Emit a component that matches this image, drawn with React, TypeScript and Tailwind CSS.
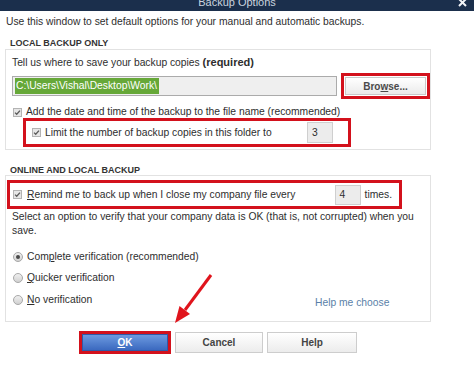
import React from "react";

function Check() {
  return (
    <svg width="9" height="9" viewBox="0 0 9 9" className="shrink-0">
      <rect x="0.5" y="0.5" width="8" height="8" fill="#e6e6e6" stroke="#b3b3b3" />
      <path d="M2 4.6 L3.7 6.3 L7 2.6" fill="none" stroke="#5a5a5a" strokeWidth="1.3" />
    </svg>
  );
}

function Radio({ on }: { on?: boolean }) {
  return (
    <svg width="10" height="10" viewBox="0 0 10 10" className="shrink-0">
      <defs>
        <linearGradient id="rg" x1="0" y1="0" x2="0" y2="1">
          <stop offset="0" stopColor="#f2f2f2" />
          <stop offset="1" stopColor="#cfcfcf" />
        </linearGradient>
      </defs>
      <circle cx="5" cy="5" r="4.5" fill="url(#rg)" stroke="#a8a8a8" />
      {on && <circle cx="5" cy="5" r="2" fill="#4a4a4a" />}
    </svg>
  );
}

export default function App() {
  return (
    <div className="w-[474px] h-[368px] bg-white relative overflow-hidden text-[#2e2e2e] font-['Liberation_Sans',Arial,sans-serif] text-[10.3px]">
      {/* title bar */}
      <div className="h-[11px] bg-[#1b2f4c] relative overflow-hidden">
        <div className="absolute left-0 right-0 top-[-4px] text-center text-[11px] leading-[12px] text-[#c9d3df]">
          Backup Options
        </div>
        <svg className="absolute left-[458px] top-[-2px]" width="9" height="9" viewBox="0 0 9 9">
          <path d="M1 1 L8 8 M8 1 L1 8" stroke="#f2f4f7" strokeWidth="2" />
        </svg>
      </div>

      <div className="pl-[6px] pt-[5px] h-[17px] leading-[12px] whitespace-nowrap">
        Use this window to set default options for your manual and automatic backups.
      </div>

      <div className="mt-[10px] h-[11px] leading-[11px] pl-[10px] text-[9px] font-bold text-[#333]">
        LOCAL BACKUP ONLY
      </div>

      {/* panel 1 */}
      <div className="ml-[5px] w-[426px] h-[101px] border border-[#e2e2e2] pl-[6px] flex flex-col">
        <div className="mt-[6px] h-[12px] leading-[12px] whitespace-nowrap">
          Tell us where to save your backup copies <span className="font-bold text-[11px]">(required)</span>
        </div>
        <div className="mt-[5px] h-[26px] flex items-center">
          <div className="w-[325px] h-[20px] border border-[#ababab] bg-[#efefef] pl-[2px] flex items-center">
            <span className="bg-[#66a838] text-white h-[16px] leading-[16px] pl-[1px] pr-[2px] whitespace-nowrap">
              C:\Users\Vishal\Desktop\Work\
            </span>
          </div>
          <div className="ml-[4px] w-[89px] h-[26px] border-[3px] border-[#d3111c] p-[1px] flex">
            <div className="flex-1 bg-gradient-to-b from-white to-[#ebebeb] border border-[#c9c9c9] flex items-center justify-center font-bold text-[10px] text-[#4a4a4a]">
              <span>
                Bro<span className="underline">w</span>se...
              </span>
            </div>
          </div>
        </div>
        <div className="mt-[7px] h-[12px] flex items-center pl-[1px] gap-[4px] whitespace-nowrap">
          <Check />
          <span className="leading-[12px]">Add the date and time of the backup to the file name (recommended)</span>
        </div>
        <div className="ml-[11px] w-[328px] h-[29px] border-[3px] border-[#d3111c] flex items-center pl-[6px] pr-[15px]">
          <Check />
          <span className="ml-[4px] leading-[12px] whitespace-nowrap">
            Limit the number of backup copies in this folder to
          </span>
          <div className="ml-auto w-[26px] h-[21px] bg-[#ececec] border border-[#cfcfcf] pl-[4px] flex items-center">
            3
          </div>
        </div>
      </div>

      <div className="mt-[15px] h-[10px] leading-[10px] pl-[10px] text-[9px] font-bold text-[#333]">
        ONLINE AND LOCAL BACKUP
      </div>

      {/* panel 2 */}
      <div className="ml-[5px] w-[426px] h-[147px] border border-[#e2e2e2] flex flex-col">
        <div className="ml-[1px] mt-[4px] w-[395px] h-[29px] border-[3px] border-[#d3111c] flex items-center pl-[3px] pr-[7px]">
          <Check />
          <span className="ml-[5px] leading-[12px] whitespace-nowrap">
            <span className="underline">R</span>emind me to back up when I close my company file every
          </span>
          <div className="ml-auto flex items-center gap-[4px]">
            <div className="w-[26px] h-[20px] bg-[#ececec] border border-[#cfcfcf] pl-[4px] flex items-center">
              4
            </div>
            <span>times.</span>
          </div>
        </div>
        <div className="mt-[1px] pl-[6px] leading-[14px] whitespace-nowrap">
          Select an option to verify that your company data is OK (that is, not corrupted) when you
          <br />
          save.
        </div>
        <div className="mt-[13px] h-[12px] pl-[7px] flex items-center gap-[4px] whitespace-nowrap">
          <Radio on />
          <span>
            Com<span className="underline">p</span>lete verification (recommended)
          </span>
        </div>
        <div className="mt-[9px] h-[12px] pl-[7px] flex items-center gap-[4px] whitespace-nowrap">
          <Radio />
          <span>
            <span className="underline">Q</span>uicker verification
          </span>
        </div>
        <div className="mt-[10px] h-[12px] flex items-center whitespace-nowrap">
          <div className="w-[309px] pl-[7px] flex items-center gap-[4px]">
            <Radio />
            <span>
              <span className="underline">N</span>o verification
            </span>
          </div>
          <span className="translate-y-[3px] text-[#5a7fa8]">Help me choose</span>
        </div>
      </div>

      {/* buttons */}
      <div className="mt-[9px] ml-[79px] flex items-center gap-[4px] font-bold text-[10px]">
        <div className="w-[92px] h-[23px] border-[3px] border-[#d3111c] flex">
          <div className="flex-1 bg-gradient-to-b from-[#6d9ae0] to-[#3b69bf] border border-[#2f5aa8] flex items-center justify-center text-white">
            <span>
              <span className="underline">O</span>K
            </span>
          </div>
        </div>
        <div className="w-[88px] h-[21px] bg-gradient-to-b from-white to-[#ececec] border border-[#cdcdcd] flex items-center justify-center text-[#444]">
          Cancel
        </div>
        <div className="w-[90px] h-[21px] bg-gradient-to-b from-white to-[#ececec] border border-[#cdcdcd] flex items-center justify-center text-[#444]">
          Help
        </div>
      </div>

      {/* annotation arrow */}
      <svg className="absolute left-0 top-0 pointer-events-none" width="474" height="368">
        <line x1="211" y1="275" x2="185" y2="310" stroke="#e0141c" strokeWidth="3" />
        <polygon points="175,323 190,314 179.5,306" fill="#e0141c" />
      </svg>
    </div>
  );
}
